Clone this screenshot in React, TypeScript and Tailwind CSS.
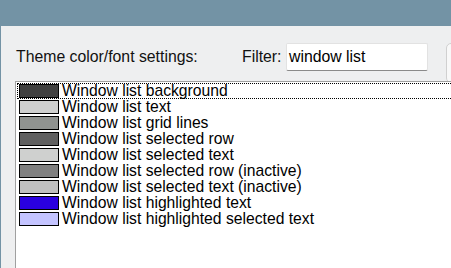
const rows: { name: string; color: string }[] = [
  { name: "Window list background", color: "bg-[#404040]" },
  { name: "Window list text", color: "bg-[#cfd0cf]" },
  { name: "Window list grid lines", color: "bg-[#909390]" },
  { name: "Window list selected row", color: "bg-[#606060]" },
  { name: "Window list selected text", color: "bg-[#cfd0cf]" },
  { name: "Window list selected row (inactive)", color: "bg-[#808080]" },
  { name: "Window list selected text (inactive)", color: "bg-[#c0c0c0]" },
  { name: "Window list highlighted text", color: "bg-[#2a00e0]" },
  { name: "Window list highlighted selected text", color: "bg-[#c4c4ff]" },
];

export default function App() {
  return (
    <div className="w-[451px] h-[268px] overflow-hidden bg-[#7393a5] pl-[1px] pt-[26px] font-['Liberation_Sans',Arial,sans-serif] text-black">
      <div className="h-full bg-[#eeeff0] flex flex-col pt-[17px]">
        {/* header */}
        <div className="flex flex-row items-center h-[28px] text-[15.8px] whitespace-nowrap">
          <span className="ml-[15px] w-[183px] shrink-0 text-[#111]">Theme color/font settings:</span>
          <span className="ml-[43px] w-[44px] shrink-0 text-[#111]">Filter:</span>
          <div className="w-[142px] h-[28px] shrink-0 bg-white border border-[#e2e2e2] border-b-[#8a8a8a] rounded-[2px] flex items-center pl-[2px]">
            window list
          </div>
          <div className="ml-[18px] w-[40px] h-[40px] shrink-0 self-start border border-[#d0d0d0] rounded-[5px] bg-[#f8f8f8]" />
        </div>
        {/* list */}
        <div className="mt-[10px] ml-[14px] flex-1 w-[480px] shrink-0 bg-white border border-[#a0a0a0] border-r-0 border-b-0 pt-[1px] pl-[1px]">
          {rows.map((r, i) => (
            <div
              key={i}
              className={
                "flex flex-row items-center h-[16px] text-[15.7px] leading-[16px] whitespace-nowrap " +
                (i === 0 ? "border border-dotted border-black" : "border border-transparent")
              }
            >
              <div className={"ml-[1px] w-[40px] h-[14px] shrink-0 border border-black " + r.color} />
              <span className="ml-[3px]">{r.name}</span>
            </div>
          ))}
        </div>
      </div>
    </div>
  );
}
